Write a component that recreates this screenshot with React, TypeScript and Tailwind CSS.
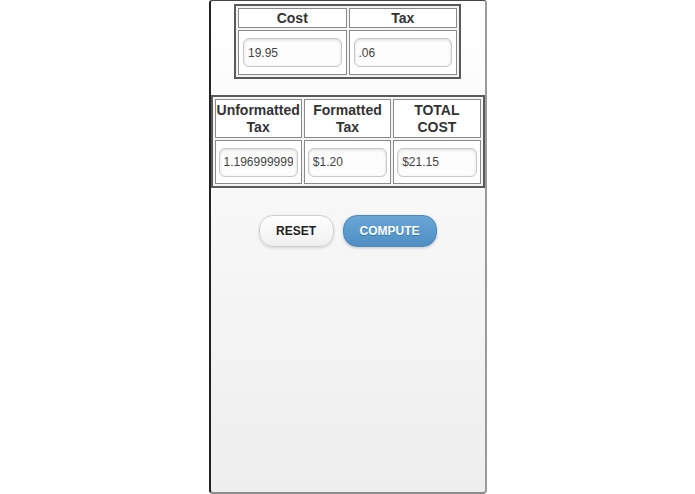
import type { FC } from 'react';

const inputCls =
  'w-full h-[29px] rounded-[6px] border border-[#c8c8c8] bg-[#fdfdfd] px-[4px] text-[12px] text-[#444] shadow-[inset_0_1px_3px_rgba(0,0,0,0.15)] outline-none';

const cellCls = 'border border-[#8a8a8a] bg-white';

const App: FC = () => {
  return (
    <div className="w-[695px] h-[494px] bg-white font-['Liberation_Sans',Arial,sans-serif] text-[#333]">
      <div className="mx-auto w-[278px] h-[494px] rounded-b-[4px] rounded-t-[3px] border-l-[2px] border-l-[#222] border-r-[2px] border-r-[#9a9a9a] border-b-[2px] border-b-[#8c8c8c] border-t border-t-[#444] bg-gradient-to-b from-white via-[#f6f6f6] to-[#eeeeee]">
        <div className="flex justify-center pt-[3px]">
          <table className="w-[227px] border-separate border-spacing-[2px] border-[2px] border-[#5a5a5a] bg-[#f4f4f4]">
            <tbody>
              <tr>
                <th className={`${cellCls} h-[20px] w-1/2 text-[14px] font-bold leading-[16px]`}>Cost</th>
                <th className={`${cellCls} h-[20px] w-1/2 text-[14px] font-bold leading-[16px]`}>Tax</th>
              </tr>
              <tr>
                <td className={`${cellCls} h-[45px] px-[4px]`}>
                  <input className={inputCls} defaultValue="19.95" />
                </td>
                <td className={`${cellCls} h-[45px] px-[4px]`}>
                  <input className={inputCls} defaultValue=".06" />
                </td>
              </tr>
            </tbody>
          </table>
        </div>

        <div className="mt-[16px] flex justify-center">
          <table className="w-[274px] table-fixed border-separate border-spacing-[2px] border-[2px] border-[#5a5a5a] bg-[#f4f4f4]">
            <tbody>
              <tr>
                <th className={`${cellCls} h-[39px] text-[14px] font-bold leading-[17px]`}>
                  Unformatted
                  <br />
                  Tax
                </th>
                <th className={`${cellCls} h-[39px] text-[14px] font-bold leading-[17px]`}>
                  Formatted
                  <br />
                  Tax
                </th>
                <th className={`${cellCls} h-[39px] text-[14px] font-bold leading-[17px]`}>
                  TOTAL
                  <br />
                  COST
                </th>
              </tr>
              <tr>
                <td className={`${cellCls} h-[44px] px-[3px]`}>
                  <input className={inputCls} defaultValue="1.196999999" />
                </td>
                <td className={`${cellCls} h-[44px] px-[3px]`}>
                  <input className={inputCls} defaultValue="$1.20" />
                </td>
                <td className={`${cellCls} h-[44px] px-[3px]`}>
                  <input className={inputCls} defaultValue="$21.15" />
                </td>
              </tr>
            </tbody>
          </table>
        </div>

        <div className="mt-[27px] flex justify-center gap-[9px]">
          <button className="h-[32px] w-[75px] rounded-[14px] border border-[#cfcfcf] bg-gradient-to-b from-white to-[#f0f0f0] text-[12px] font-bold text-[#222] shadow-[0_1px_3px_rgba(0,0,0,0.15)]">
            RESET
          </button>
          <button className="h-[32px] w-[94px] rounded-[14px] border border-[#4a8ac0] bg-gradient-to-b from-[#6aa6d6] to-[#4f8fc4] text-[12px] font-bold text-white shadow-[0_1px_3px_rgba(0,0,0,0.2)] [text-shadow:0_1px_0_#3373a5]">
            COMPUTE
          </button>
        </div>
      </div>
    </div>
  );
};

export default App;
